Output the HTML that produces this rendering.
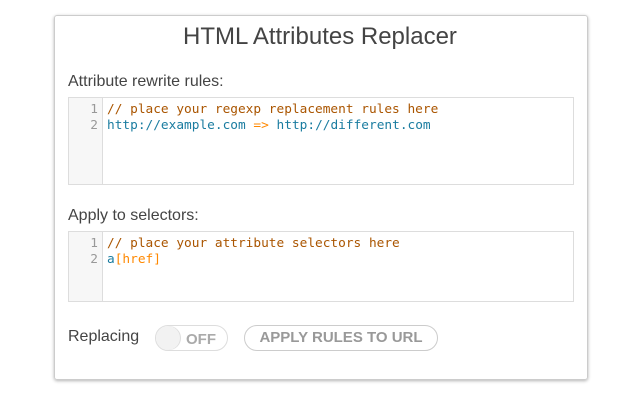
<!DOCTYPE html>
<html><head><style>
body{margin:0;width:640px;height:400px;background:#fff;font-family:"Liberation Sans",sans-serif;position:relative;overflow:hidden}
.panel{position:absolute;left:54px;top:15px;width:532px;height:363px;border:1px solid #ccc;border-radius:3px;box-shadow:0 1px 3px rgba(0,0,0,.3)}
.title{position:absolute;left:0;right:0;top:23px;text-align:center;font-size:24px;color:#444}
.lbl{position:absolute;left:68px;font-size:16px;color:#444}
.ed{position:absolute;left:68px;width:504px;border:1px solid #ddd;background:#fff;font-family:"DejaVu Sans Mono",monospace;font-size:12.8px;line-height:16px}
.gut{position:absolute;left:0;top:0;bottom:0;width:33px;background:#f7f7f7;border-right:1px solid #ddd;color:#999;text-align:right}
.gut div{padding-right:4px}
.code{position:absolute;left:38px;top:4px;white-space:pre}
.c{color:#a50}.v{color:#1a7ca0}.o{color:#f80}
.sw{position:absolute;left:155px;top:325px;width:71px;height:24px;border:1px solid #ddd;border-radius:13px}
.knob{position:absolute;left:0;top:0;width:24px;height:24px;border-radius:50%;background:#f2f2f2;box-shadow:1px 0 0 #ddd}
.off{position:absolute;left:30px;top:5px;font-weight:bold;font-size:15px;color:#aaa}
.btn{position:absolute;left:244px;top:325px;width:192px;height:24px;border:1px solid #ccc;border-radius:13px;text-align:center;line-height:24px;font-weight:bold;font-size:15px;color:#999}
</style></head><body>
<div class="panel"></div>
<div class="title">HTML Attributes Replacer</div>
<div class="lbl" style="top:73px">Attribute rewrite rules:</div>
<div class="ed" style="top:97px;height:86px"><div class="gut" style="padding-top:4px"><div>1</div><div>2</div></div>
<div class="code"><span class="c">// place your regexp replacement rules here</span>
<span class="v">http://example.com</span> <span class="o">=&gt;</span> <span class="v">http://different.com</span></div></div>
<div class="lbl" style="top:207px">Apply to selectors:</div>
<div class="ed" style="top:231px;height:69px"><div class="gut" style="padding-top:4px"><div>1</div><div>2</div></div>
<div class="code"><span class="c">// place your attribute selectors here</span>
<span class="v">a</span><span class="o">[href]</span></div></div>
<div class="lbl" style="top:328px">Replacing</div>
<div class="sw"><div class="knob"></div><div class="off">OFF</div></div>
<div class="btn">APPLY RULES TO URL</div>
</body></html>
